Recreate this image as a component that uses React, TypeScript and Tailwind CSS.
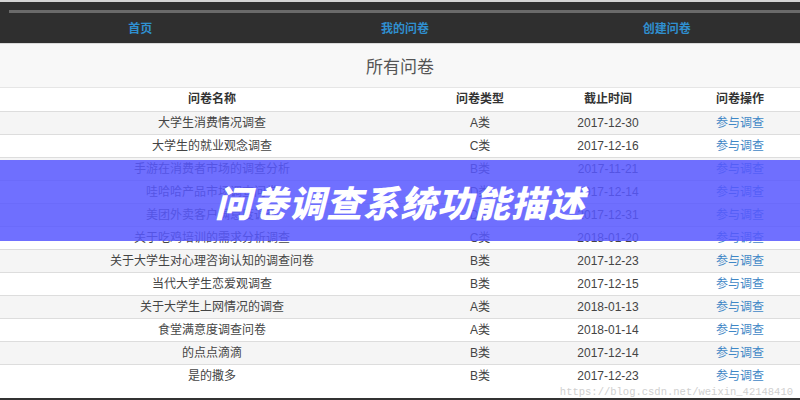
const rows = [
  { name: '大学生消费情况调查', type: 'A类', date: '2017-12-30' },
  { name: '大学生的就业观念调查', type: 'C类', date: '2017-12-16' },
  { name: '手游在消费者市场的调查分析', type: 'B类', date: '2017-11-21' },
  { name: '哇哈哈产品市场调查问卷', type: 'D类', date: '2017-12-14' },
  { name: '美团外卖客户满意度调查', type: 'D类', date: '2017-12-31' },
  { name: '关于吃鸡培训的需求分析调查', type: 'C类', date: '2018-01-20' },
  { name: '关于大学生对心理咨询认知的调查问卷', type: 'B类', date: '2017-12-23' },
  { name: '当代大学生恋爱观调查', type: 'B类', date: '2017-12-15' },
  { name: '关于大学生上网情况的调查', type: 'A类', date: '2018-01-13' },
  { name: '食堂满意度调查问卷', type: 'A类', date: '2018-01-14' },
  { name: '的点点滴滴', type: 'B类', date: '2017-12-14' },
  { name: '是的撒多', type: 'B类', date: '2017-12-23' },
]

export default function App() {
  return (
    <div
      className="relative w-[800px] h-[400px] overflow-hidden bg-white"
      style={{ fontFamily: '"Liberation Sans", "Noto Sans CJK SC", sans-serif' }}
    >
      <div className="h-[2px] bg-[#d4d4d4]" />
      <header className="h-[41px] bg-[#2f2f2f] pt-[8px]">
        <div className="ml-[9px] h-[3px] bg-[#6a6a6a]" />
        <nav className="grid grid-cols-3 mt-[7px] text-[12px] font-semibold text-[#2f8fd0]">
          <a className="text-center pl-[14px]">首页</a>
          <a className="text-center pl-[10px]">我的问卷</a>
          <a className="text-center">创建问卷</a>
        </nav>
      </header>
      <div className="h-[1px] bg-[#d9d9d9]" />
      <div className="h-[43px] bg-[#f8f8f8] flex items-center justify-center text-[17px] text-[#555] pt-[4px]">
        所有问卷
      </div>
      <div className="h-[1px] bg-[#e6e6e6]" />

      <table className="w-full table-fixed border-collapse text-[12px] text-[#333]">
        <colgroup>
          <col className="w-[424px]" />
          <col className="w-[112px]" />
          <col className="w-[144px]" />
          <col className="w-[120px]" />
        </colgroup>
        <thead>
          <tr className="h-[23px]">
            <th className="text-center font-bold">问卷名称</th>
            <th className="text-center font-bold">问卷类型</th>
            <th className="text-center font-bold">截止时间</th>
            <th className="text-center font-bold">问卷操作</th>
          </tr>
        </thead>
        <tbody>
          {rows.map((r, i) => (
            <tr key={i} className={`h-[23px] border-t border-[#dddddd] ${i % 2 === 0 ? 'bg-[#f5f5f5]' : 'bg-white'}`}>
              <td className="text-center text-[#444]">{r.name}</td>
              <td className="text-center text-[#444]">{r.type}</td>
              <td className="text-center text-[#444]">{r.date}</td>
              <td className="text-center text-[#3f87c6]">参与调查</td>
            </tr>
          ))}
        </tbody>
      </table>

      <div className="absolute left-0 right-0 top-[160px] h-[81px] bg-[#5757ff]/85 flex items-center justify-center">
        <span
          className="text-[36px] font-black italic text-white tracking-[1px]"
          style={{ fontFamily: '"Noto Sans CJK SC", sans-serif' }}
        >
          问卷调查系统功能描述
        </span>
      </div>

      <div className="absolute right-[7px] bottom-[3px] text-[10.5px] leading-none text-[#d0d0d0] font-['Liberation_Mono',monospace]">
        https://blog.csdn.net/weixin_42148410
      </div>
      <div className="absolute left-0 right-0 bottom-0 h-[2px] bg-[#333]" />
    </div>
  )
}
